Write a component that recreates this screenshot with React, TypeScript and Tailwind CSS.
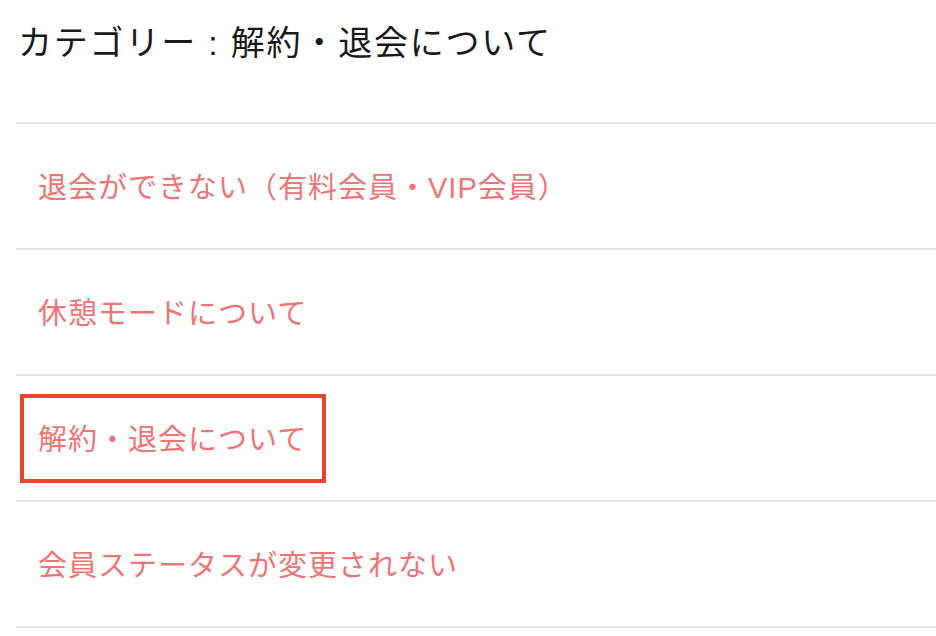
import React from 'react';

const items = [
  '退会ができない（有料会員・VIP会員）',
  '休憩モードについて',
  '解約・退会について',
  '会員ステータスが変更されない',
];

const App: React.FC = () => {
  return (
    <div className="w-[936px] h-[636px] bg-white overflow-hidden pl-4 font-['Liberation_Sans','Noto_Sans_CJK_JP',sans-serif]">
      <div className="h-[124px] border-b-2 border-[#e5e5e5] pt-[17px] pl-[2px]">
        <h1 className="text-[34px] leading-[52px] tracking-[1.8px] text-[#1a1a1a] font-normal">
          カテゴリー : 解約・退会について
        </h1>
      </div>
      <ul>
        {items.map((label, i) => (
          <li key={label} className="h-[126px] border-b-2 border-[#e5e5e5] flex items-center pl-[22px] pt-[3px]">
            <span className="relative text-[29px] leading-[40px] tracking-[1px] text-[#f07474]">
              {label}
              {i === 2 && (
                <span className="absolute left-[-18px] right-[-19px] top-[-26px] bottom-[-23px] border-4 border-[#e9442e] pointer-events-none" />
              )}
            </span>
          </li>
        ))}
      </ul>
    </div>
  );
};

export default App;
